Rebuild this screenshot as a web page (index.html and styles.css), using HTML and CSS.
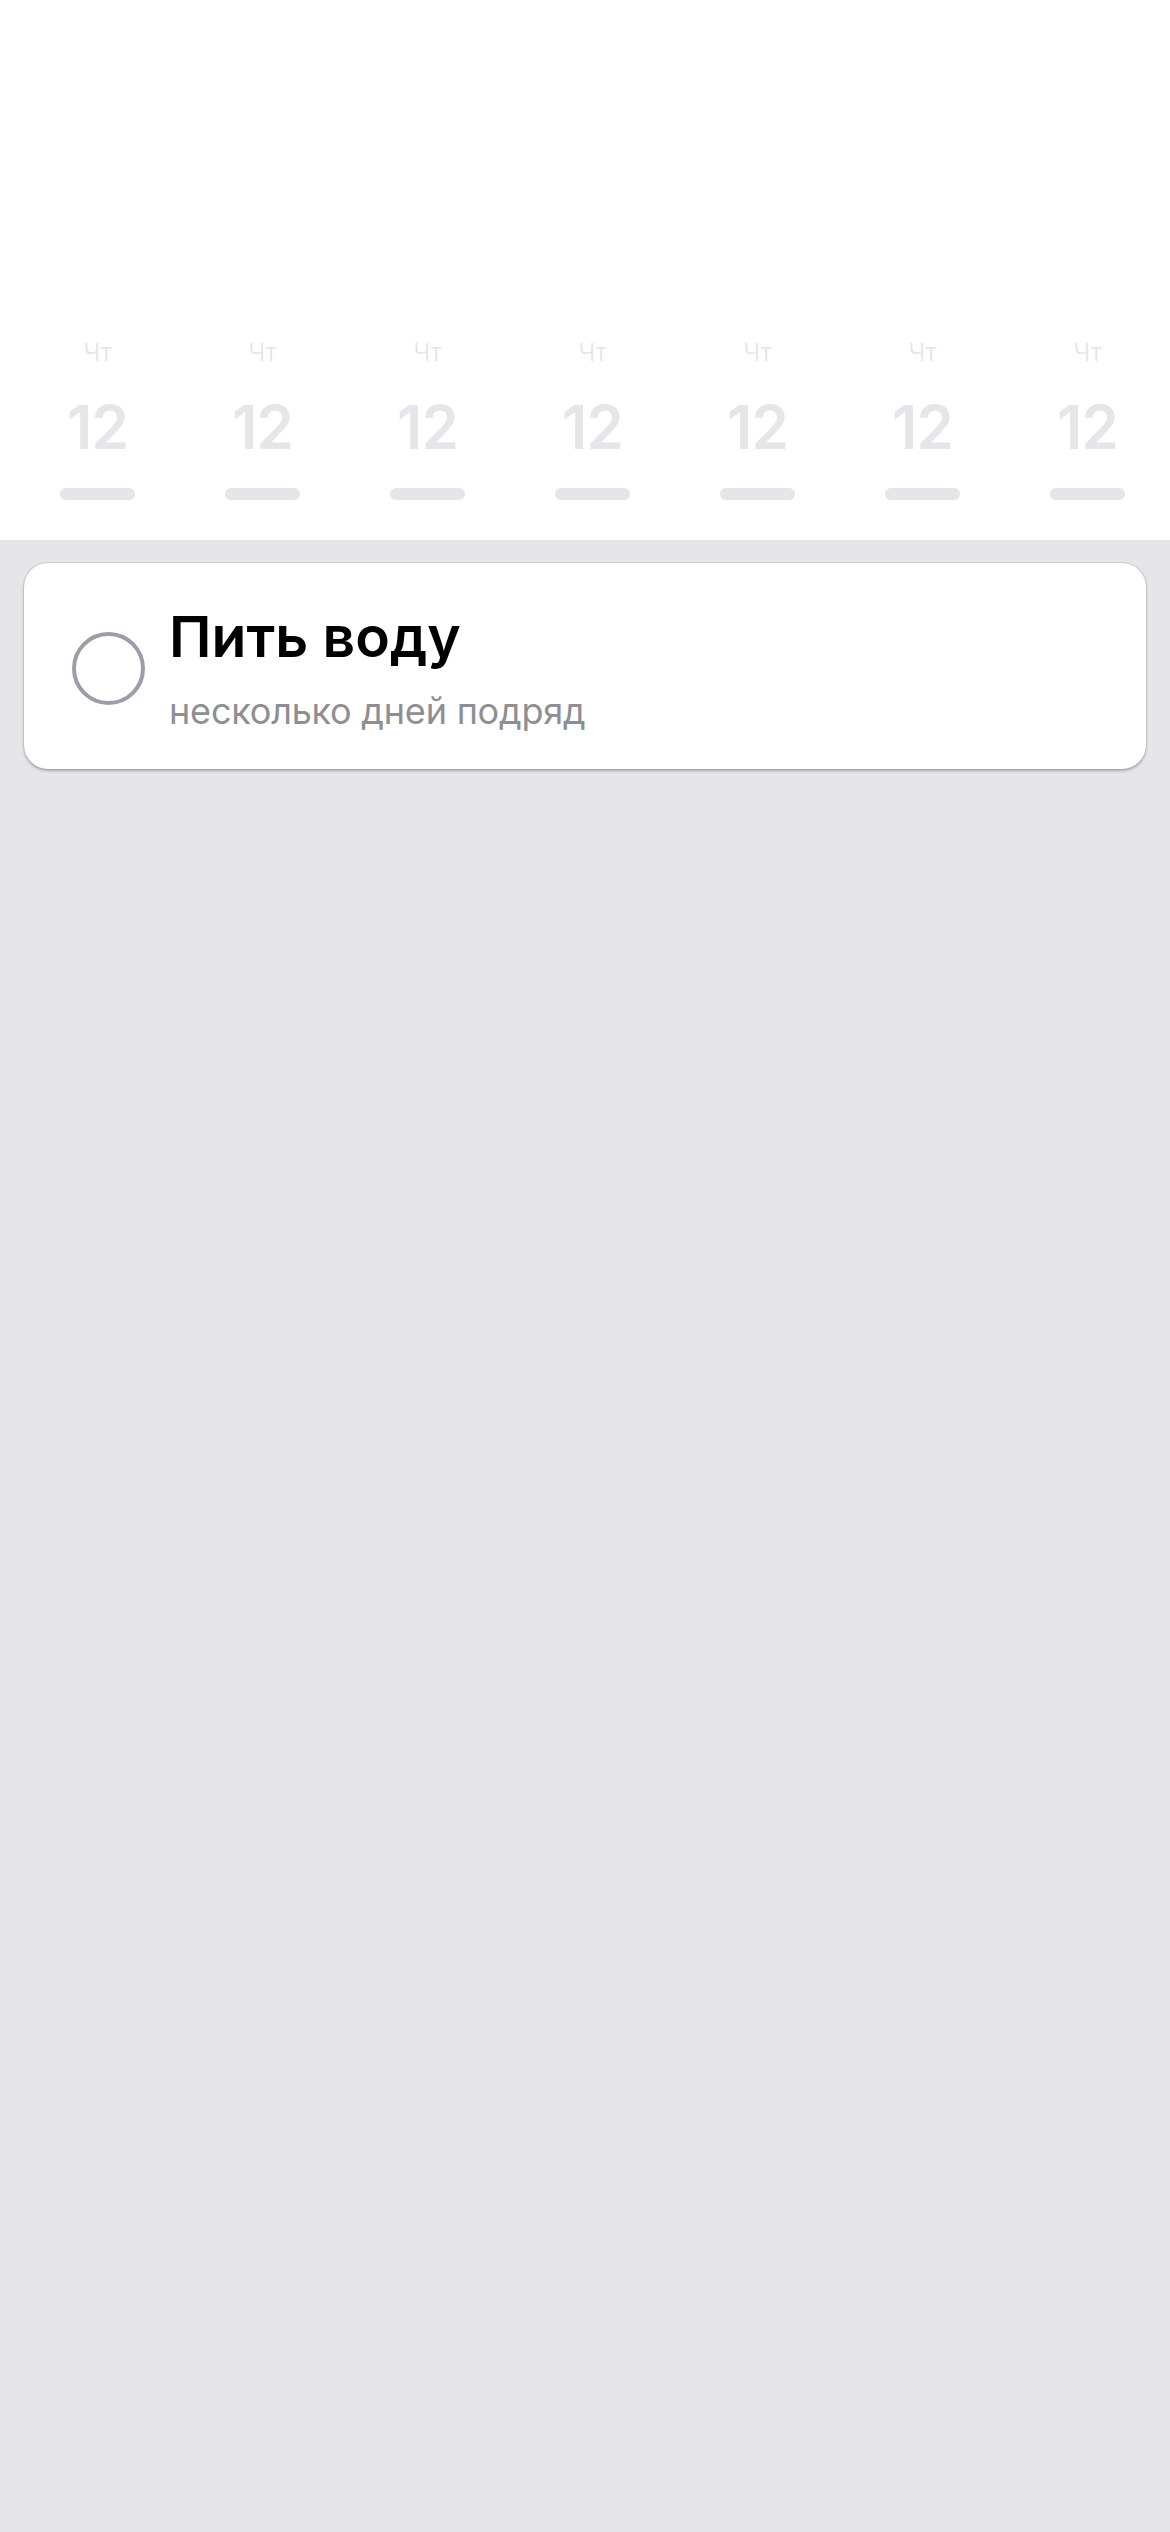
FILE: index.html
```html
<!DOCTYPE html>
<html lang="ru">
<head>
<meta charset="utf-8">
<title>Привычки</title>
<link rel="stylesheet" href="styles.css">
</head>
<body>
<header class="week">
  <div class="day"><span class="dow">Чт</span><span class="num">12</span><span class="bar"></span></div>
  <div class="day"><span class="dow">Чт</span><span class="num">12</span><span class="bar"></span></div>
  <div class="day"><span class="dow">Чт</span><span class="num">12</span><span class="bar"></span></div>
  <div class="day"><span class="dow">Чт</span><span class="num">12</span><span class="bar"></span></div>
  <div class="day"><span class="dow">Чт</span><span class="num">12</span><span class="bar"></span></div>
  <div class="day"><span class="dow">Чт</span><span class="num">12</span><span class="bar"></span></div>
  <div class="day"><span class="dow">Чт</span><span class="num">12</span><span class="bar"></span></div>
</header>
<main class="list">
  <section class="card">
    <span class="check"></span>
    <div class="text">
      <h2 class="title">Пить воду</h2>
      <p class="sub">несколько дней подряд</p>
    </div>
  </section>
</main>
</body>
</html>
```

FILE: styles.css
```css
html, body {
  margin: 0;
  padding: 0;
}
body {
  width: 1170px;
  min-height: 2532px;
  background: #e5e5ea;
  font-family: Inter, "Noto Sans", "DejaVu Sans", sans-serif;
}
.week {
  background: #ffffff;
  display: grid;
  grid-template-columns: repeat(7, 165px);
  padding: 341px 0 40px 15px;
}
.day {
  display: flex;
  flex-direction: column;
  align-items: center;
}
.dow {
  font-size: 24px;
  line-height: 24px;
  font-weight: 300;
  color: #e3e3e8;
}
.num {
  margin-top: 32px;
  font-size: 60px;
  line-height: 60px;
  font-weight: 600;
  color: #e5e5ea;
  letter-spacing: -1px;
}
.bar {
  margin-top: 31px;
  width: 75px;
  height: 12px;
  border-radius: 6px;
  background: #e5e5ea;
}
.list {
  padding: 23px 24px;
}
.card {
  background: #ffffff;
  border-radius: 24px;
  box-shadow: 0 0 0 1px rgba(0, 0, 0, 0.07), 0 1.5px 3px rgba(0, 0, 0, 0.25);
  display: flex;
  align-items: center;
  padding: 40px 24px 36px 48px;
}
.check {
  flex: none;
  width: 65px;
  height: 65px;
  border: 4px solid #9f9ca7;
  border-radius: 50%;
  margin-right: 24px;
}
.text {
  display: flex;
  flex-direction: column;
}
.title {
  margin: 0;
  font-size: 57px;
  line-height: 67px;
  font-weight: 600;
  color: #000000;
  letter-spacing: 0;
}
.sub {
  margin: 20px 0 0;
  font-size: 36px;
  line-height: 43px;
  font-weight: 400;
  color: #8e8e93;
  letter-spacing: -0.2px;
}
```
